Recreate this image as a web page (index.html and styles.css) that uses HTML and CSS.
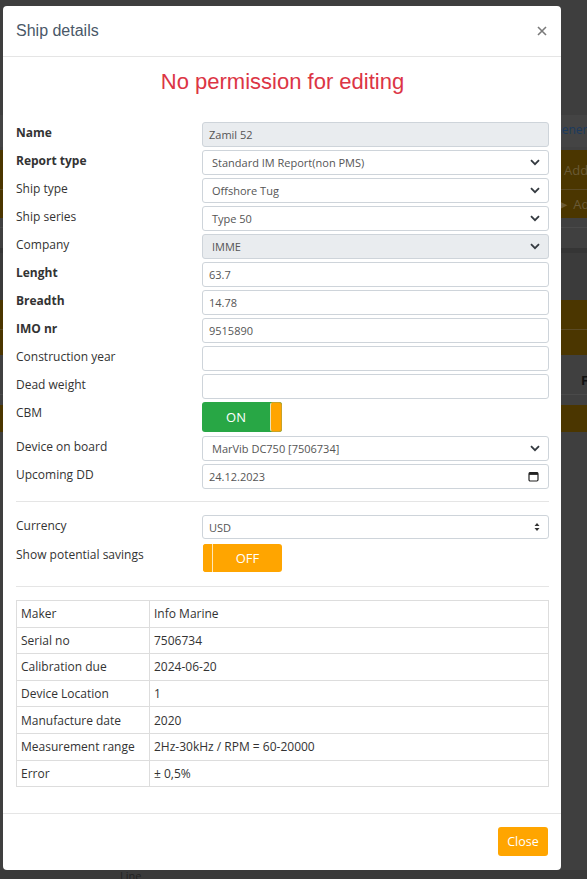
FILE: index.html
```html
<!DOCTYPE html>
<html lang="en">
<head>
<meta charset="utf-8">
<title>Ship details</title>
<link rel="stylesheet" href="styles.css">
</head>
<body>
<div class="page">
  <div class="band b-top"></div>
  <div class="band b-link"><span class="link-text">General</span></div>
  <div class="band b-gap3"></div>
  <div class="band b-brown b-add1"><span class="btn-text">Add</span></div>
  <div class="band b-brown b-add2"><span class="btn-text">&#9658; Add</span></div>
  <div class="band b-row"></div>
  <div class="band b-dark"></div>
  <div class="band b-mid"></div>
  <div class="band b-brown b-h30"></div>
  <div class="band b-brown b-h25"></div>
  <div class="band b-head"><span class="head-text">F</span></div>
  <div class="band b-gap10"></div>
  <div class="band b-brown b-h27"></div>
  <div class="band b-rest"></div>
  <div class="band b-bottom"><span class="bottom-text">Line</span></div>
</div>

<div class="modal">
  <div class="modal-header">
    <h4 class="modal-title">Ship details</h4>
    <span class="close-x" aria-label="Close">
      <svg width="10" height="10" viewBox="0 0 10 10"><path d="M1 1L9 9M9 1L1 9" stroke="#7a7a7a" stroke-width="1.6" fill="none"/></svg>
    </span>
  </div>
  <div class="modal-body">
    <h3 class="warning">No permission for editing</h3>

    <div class="frow"><label class="lbl bold">Name</label><div class="field ro">Zamil 52</div></div>
    <div class="frow"><label class="lbl bold">Report type</label><div class="field sel"><span>Standard IM Report(non PMS)</span><svg class="chev" width="10" height="7" viewBox="0 0 10 7"><path d="M1 1.2L5 5.2L9 1.2" stroke="#343a40" stroke-width="1.8" fill="none"/></svg></div></div>
    <div class="frow"><label class="lbl">Ship type</label><div class="field sel"><span>Offshore Tug</span><svg class="chev" width="10" height="7" viewBox="0 0 10 7"><path d="M1 1.2L5 5.2L9 1.2" stroke="#343a40" stroke-width="1.8" fill="none"/></svg></div></div>
    <div class="frow"><label class="lbl">Ship series</label><div class="field sel"><span>Type 50</span><svg class="chev" width="10" height="7" viewBox="0 0 10 7"><path d="M1 1.2L5 5.2L9 1.2" stroke="#343a40" stroke-width="1.8" fill="none"/></svg></div></div>
    <div class="frow"><label class="lbl">Company</label><div class="field sel ro"><span>IMME</span><svg class="chev" width="10" height="7" viewBox="0 0 10 7"><path d="M1 1.2L5 5.2L9 1.2" stroke="#343a40" stroke-width="1.8" fill="none"/></svg></div></div>
    <div class="frow"><label class="lbl bold">Lenght</label><div class="field">63.7</div></div>
    <div class="frow"><label class="lbl bold">Breadth</label><div class="field">14.78</div></div>
    <div class="frow"><label class="lbl bold">IMO nr</label><div class="field">9515890</div></div>
    <div class="frow"><label class="lbl">Construction year</label><div class="field"></div></div>
    <div class="frow"><label class="lbl">Dead weight</label><div class="field"></div></div>
    <div class="frow frow-toggle"><label class="lbl">CBM</label>
      <div class="toggle on"><span class="t-label">ON</span><span class="t-handle"></span></div>
    </div>
    <div class="frow"><label class="lbl">Device on board</label><div class="field sel"><span>MarVib DC750 [7506734]</span><svg class="chev" width="10" height="7" viewBox="0 0 10 7"><path d="M1 1.2L5 5.2L9 1.2" stroke="#343a40" stroke-width="1.8" fill="none"/></svg></div></div>
    <div class="frow"><label class="lbl">Upcoming DD</label><div class="field date"><span>24.12.2023</span><svg class="cal" width="11" height="11" viewBox="0 0 11 11"><rect x="1" y="1.5" width="9" height="8.5" rx="1.2" stroke="#222" stroke-width="1.2" fill="none"/><rect x="1" y="1.5" width="9" height="2.4" fill="#222"/></svg></div></div>

    <hr class="sep sep1">

    <div class="frow frow-cur"><label class="lbl">Currency</label><div class="field sel cur"><span>USD</span><svg class="updown" width="6" height="10" viewBox="0 0 6 10"><path d="M3 1L5.5 4H0.5Z M3 9L5.5 6H0.5Z" fill="#333"/></svg></div></div>
    <div class="frow frow-off"><label class="lbl">Show potential savings</label>
      <div class="toggle off"><span class="t-handle"></span><span class="t-label">OFF</span></div>
    </div>

    <hr class="sep sep2">

    <table class="info">
      <tr><td class="k">Maker</td><td>Info Marine</td></tr>
      <tr><td class="k">Serial no</td><td>7506734</td></tr>
      <tr><td class="k">Calibration due</td><td>2024-06-20</td></tr>
      <tr><td class="k">Device Location</td><td>1</td></tr>
      <tr><td class="k">Manufacture date</td><td>2020</td></tr>
      <tr><td class="k">Measurement range</td><td>2Hz-30kHz / RPM = 60-20000</td></tr>
      <tr><td class="k">Error</td><td>± 0,5%</td></tr>
    </table>
  </div>
  <div class="modal-footer">
    <button class="btn-close" type="button">Close</button>
  </div>
</div>
</body>
</html>
```

FILE: styles.css
```css
html, body {
  margin: 0;
  padding: 0;
  width: 587px;
  height: 879px;
  overflow: hidden;
  background: #404040;
  font-family: "Open Sans", "Noto Sans", sans-serif;
}

/* dimmed page behind the modal */
.page {
  display: flex;
  flex-direction: column;
  width: 587px;
  height: 879px;
}
.band { flex: none; position: relative; box-sizing: border-box; white-space: nowrap; overflow: hidden; }
.b-top { height: 115px; background: #3e3e3e; }
.b-link { height: 32px; background: #444; padding-left: 553px; line-height: 30px; font-size: 12px; }
.link-text { color: #1b3a5e; }
.b-gap3 { height: 3px; background: #404040; }
.b-brown { background: #4b3600; }
.b-add1 { height: 40px; border-bottom: 1px solid #5a4a25; padding-left: 564px; line-height: 40px; font-size: 13px; }
.b-add2 { height: 28px; padding-left: 557px; line-height: 28px; font-size: 13px; }
.btn-text { color: #6a5a36; }
.b-row { height: 30px; background: #404040; border-top: 9px solid #404040; }
.b-row::after { content: ""; display: block; border-top: 1px solid #4a4a4a; }
.b-dark { height: 5px; background: #353535; }
.b-mid { height: 47px; background: #3b3b3b; }
.b-h30 { height: 30px; border-bottom: 1px solid #5a4a25; }
.b-h25 { height: 25px; }
.b-head { height: 40px; background: #404040; border-bottom: 1px solid #4a4a4a; padding-left: 581px; padding-top: 16px; font-size: 13px; font-weight: bold; }
.head-text { color: #111; }
.b-gap10 { height: 10px; background: #404040; }
.b-h27 { height: 27px; }
.b-rest { flex: 1; background: #3f3f3f; }
.b-bottom { height: 9px; background: #3a3a3a; padding-left: 120px; font-size: 11px; line-height: 12px; }
.bottom-text { color: #222; }

/* modal */
.modal {
  position: absolute;
  left: 3px;
  top: 6px;
  width: 558px;
  height: 864px;
  background: #fff;
  border-radius: 4px;
  box-sizing: border-box;
  display: flex;
  flex-direction: column;
}
.modal-header {
  height: 51px;
  box-sizing: border-box;
  border-bottom: 1px solid #e5e5e5;
  padding: 0 14px 0 13px;
  display: flex;
  align-items: center;
  justify-content: space-between;
}
.modal-title {
  margin: 0;
  font-family: "Liberation Sans", Arial, sans-serif;
  font-weight: normal;
  font-size: 16px;
  color: #4a5868;
  padding-bottom: 1px;
}
.close-x { display: flex; width: 10px; height: 10px; }

.modal-body {
  padding: 0 12px 25px 13px;
  flex: 1;
}
.warning {
  margin: 10px 0 25px;
  height: 30px;
  line-height: 30px;
  text-align: center;
  font-family: "Liberation Sans", Arial, sans-serif;
  font-weight: normal;
  font-size: 22px;
  color: #dc3545;
}

.frow {
  display: flex;
  align-items: flex-start;
  margin-bottom: 3px;
}
.lbl {
  width: 186px;
  flex: none;
  font-size: 12px;
  line-height: 20px;
  padding-top: 1px;
  color: #333;
}
.lbl.bold { font-weight: bold; }

.field {
  flex: 1;
  height: 25px;
  box-sizing: border-box;
  border: 1px solid #ced4da;
  border-radius: 3px;
  padding: 0 6px;
  font-size: 11px;
  line-height: 23px;
  color: #555;
  background: #fff;
  display: flex;
  align-items: center;
  justify-content: space-between;
  white-space: nowrap;
}
.field.ro { background: #e9ecef; }
.field.sel { padding: 0 8px 0 9px; }
.field.date { padding: 0 9px 0 6px; }
.field.cur { height: 24px; padding: 0 8px 0 6px; }
.chev { flex: none; }

.frow-toggle { margin-bottom: 4px; }
.toggle {
  width: 80px;
  height: 30px;
  box-sizing: border-box;
  border-radius: 3px;
  display: flex;
  align-items: stretch;
  color: #fff;
  font-size: 13px;
}
.toggle.on { background: #28a745; }
.toggle.off { background: #ffa500; height: 28px; width: 79px; margin-left: 1px; }
.t-label { flex: 1; display: flex; align-items: center; justify-content: center; }
.t-handle {
  width: 12px;
  flex: none;
  box-sizing: border-box;
  background: #ffa500;
  border-radius: 3px;
}
.toggle.on .t-handle { border: 1px solid #c9a227; border-left-color: #e8e1c0; }
.toggle.off .t-handle { width: 10px; border-right: 1px solid #ffe7b8; border-radius: 3px 0 0 3px; }

.frow-cur { margin-bottom: 5px; }

.sep {
  border: 0;
  border-top: 1px solid #e5e5e5;
  margin: 0;
}
.sep1 { margin: 12px 0 13px; }
.sep2 { margin: 14px 0 13px; }

.info {
  width: 533px;
  border-collapse: collapse;
  font-size: 12px;
  color: #333;
}
.info td {
  border: 1px solid #ddd;
  padding: 0 4px;
  height: 25.6px;
  line-height: 25px;
  white-space: nowrap;
}
.info td.k { width: 124px; }

.modal-footer {
  border-top: 1px solid #e5e5e5;
  padding: 13px 13px 14px;
  display: flex;
  justify-content: flex-end;
}
.btn-close {
  height: 29px;
  width: 50px;
  border: 0;
  border-radius: 3px;
  background: #ffa500;
  color: #fff;
  font-family: "Open Sans", "Noto Sans", sans-serif;
  font-size: 12.5px;
  padding: 0;
}
```
